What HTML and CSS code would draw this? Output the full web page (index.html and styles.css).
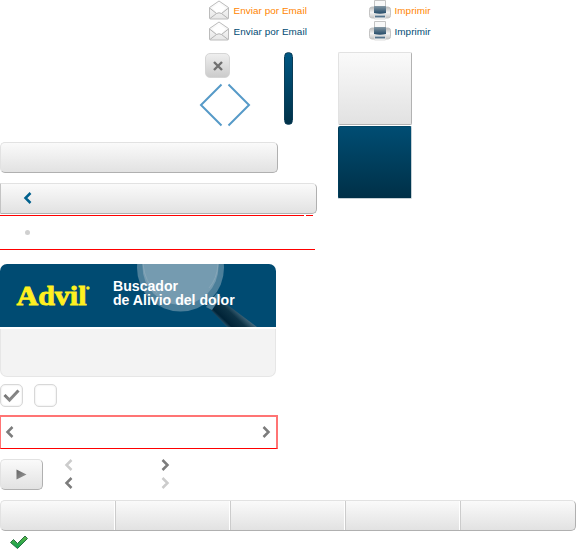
FILE: index.html
```
<!DOCTYPE html>
<html lang="es">
<head>
<meta charset="utf-8">
<title>Advil</title>
<link rel="stylesheet" href="styles.css">
</head>
<body>
<svg width="0" height="0" class="defs" aria-hidden="true">
  <defs>
    <linearGradient id="paper" x2="0" y2="1"><stop stop-color="#fff"/><stop offset="1" stop-color="#e6e6e6"/></linearGradient>
    <linearGradient id="body" x2="0" y2="1"><stop stop-color="#bbb"/><stop offset=".5" stop-color="#f4f4f4"/><stop offset="1" stop-color="#c4c4c4"/></linearGradient>
    <linearGradient id="screen" x2="0" y2="1"><stop stop-color="#8497a3"/><stop offset="1" stop-color="#234a69"/></linearGradient>
    <linearGradient id="grey" x2="1" y2="1"><stop stop-color="#666"/><stop offset="1" stop-color="#999"/></linearGradient>
    <linearGradient id="green" x2="0" y2="1"><stop stop-color="#60b546"/><stop offset="1" stop-color="#0aa150"/></linearGradient>
    <linearGradient id="handle" gradientUnits="userSpaceOnUse" x1="84" y1="58" x2="100" y2="41"><stop stop-color="#335f78"/><stop offset=".2" stop-color="#002337"/><stop offset=".6" stop-color="#0d3346"/><stop offset="1" stop-color="#55798d"/></linearGradient>
    <symbol id="mail" viewBox="0 0 22 20">
      <path d="M1.500 7.500 11 1l9.500 6.500v10.500q0 1-1 1h-17q-1 0-1-1z" fill="url(#paper)" stroke="#bcbcbc"/>
      <path d="m4 8 7-4.500L18 8l-5 5H9z" fill="#fff"/>
      <path d="m1.500 8 7 5.500q2.500-1.500 5 0l7-5.500M2 18.500l6.500-5M20 18.500l-6.500-5" fill="none" stroke="#b4b4b4"/>
    </symbol>
    <symbol id="print" viewBox="0 0 22 20">
      <path d="M5.500.5h11v7h-11z" fill="#f8f8f8" stroke="#c4c4c4"/>
      <rect x=".5" y="7" width="21" height="11" rx="2.500" fill="url(#body)" stroke="#c4c4c4"/>
      <path d="M5 6h12v7q-6 1.500-12 0z" fill="url(#screen)"/>
      <path d="M5.500 14.500h11v4.500h-11z" fill="#fafafa" stroke="#ddd"/>
      <path d="M6 16.500h10" stroke="#56748c" stroke-width="2"/>
    </symbol>
    <symbol id="left" viewBox="0 0 9 12"><path d="M7.500 1 2.500 6l5 5" fill="none" stroke="currentColor" stroke-width="2.500"/></symbol>
    <symbol id="right" viewBox="0 0 9 12"><path d="m1.500 1 5 5-5 5" fill="none" stroke="currentColor" stroke-width="2.500"/></symbol>
  </defs>
</svg>
<main class="page">
  <div class="actions">
    <div class="action hot"><svg><use href="#mail"/></svg><span>Enviar por Email</span></div>
    <div class="action hot"><svg><use href="#print"/></svg><span>Imprimir</span></div>
    <div class="action"><svg><use href="#mail"/></svg><span>Enviar por Email</span></div>
    <div class="action"><svg><use href="#print"/></svg><span>Imprimir</span></div>
  </div>

  <div class="controls">
    <div class="browse">
      <div class="close"><svg width="12" height="12" viewBox="0 0 12 12"><path d="m2 2 8 8M10 2l-8 8" stroke="#707070" stroke-width="2.400"/></svg></div>
      <svg class="arrows" width="52" height="44" viewBox="0 0 52 44"><path d="M22.500 1.500 2 22l20.500 20.500M29.500 1.500 50 22 29.500 42.500" fill="none" stroke="#569ac8" stroke-width="2"/></svg>
    </div>
    <div class="scrollbar"></div>
    <div class="tiles"><div class="tile"></div><div class="tile dark"></div></div>
  </div>

  <div class="bar"></div>
  <div class="bar back"><svg class="chev"><use href="#left"/></svg></div>
  <div class="rules">
    <div class="rule-top"><i></i><i></i></div>
    <span class="dot"></span>
  </div>

  <section class="finder">
    <header>
      <svg class="lens" width="140" height="63" viewBox="0 0 140 63">
        <path d="m72 43 11-12 6 8 32 24H91z" fill="url(#handle)"/>
        <path d="m70 43 11-14 4 4-9 13z" fill="#4c7e98"/>
        <circle cx="44.500" cy="4" r="43.500" fill="#4c7f9a"/>
        <circle cx="44.500" cy="3" r="38" fill="#759bb0"/>
        <path d="M7 0q2 19 14 29M82 0q-1 15-9 24" fill="none" stroke="#86a6b8"/>
      </svg>
      <svg class="logo" width="76" height="26" viewBox="0 0 76 26"><text x=".5" y="21" textLength="70" lengthAdjust="spacingAndGlyphs">Advil</text><circle cx="72" cy="4" r="1.800" fill="#fff020"/></svg>
      <h1>Buscador<br>de Alivio del dolor</h1>
    </header>
    <div class="panel"></div>
  </section>

  <div class="checks">
    <div class="box"><svg width="17" height="14" viewBox="0 0 17 14"><path d="m1.500 6 5 5L15.500 1.500" fill="none" stroke="url(#grey)" stroke-width="3"/></svg></div>
    <div class="box"></div>
  </div>

  <div class="slider"><svg class="chev"><use href="#left"/></svg><svg class="chev"><use href="#right"/></svg></div>

  <div class="player">
    <div class="play"><svg width="11" height="11" viewBox="0 0 11 11"><path d="m.5.500 10 5-10 5z" fill="url(#grey)"/></svg></div>
    <div class="pager">
      <svg class="chev off"><use href="#left"/></svg><svg class="chev"><use href="#right"/></svg>
      <svg class="chev"><use href="#left"/></svg><svg class="chev off"><use href="#right"/></svg>
    </div>
  </div>

  <div class="tabs"><div></div><div></div><div></div><div></div><div></div></div>
  <svg class="ok" width="20" height="16" viewBox="0 0 20 16"><path d="m1.500 7.500 3-3 4 4L16 1l2.500 2.500L8.500 13.500z" fill="url(#green)" stroke="#287044" stroke-linejoin="round"/></svg>
</main>
</body>
</html>
```
FILE: styles.css
```
* { box-sizing: border-box; }
body { margin: 0; background: #fff; font-family: "Liberation Sans", Arial, sans-serif; }
svg { display: block; flex: none; }
.defs { position: absolute; }
.page { width: 576px; height: 550px; overflow: hidden; }

.actions {
  display: grid;
  grid-template-columns: 161px 100px;
  grid-auto-rows: 21px;
  margin-left: 208px;
  height: 52px;
}
.action { display: flex; gap: 3.500px; font-size: 9.900px; letter-spacing: .06px; line-height: 21px; color: #004b73; white-space: nowrap; }
.action svg { width: 22px; height: 20px; }
.hot { color: #ff8500; }

.controls { display: flex; height: 90px; }
.browse { width: 85px; margin-left: 199px; }
.close {
  display: flex; align-items: center; justify-content: center;
  width: 25px; height: 25px; margin: 1px 0 5px 6px;
  border: 1px solid #d6d6d6; border-radius: 5px;
  background: linear-gradient(#eee, #ccc);
}
.scrollbar {
  width: 9px; height: 73px; margin-right: 45px;
  border: 1px solid #0a3c56; border-radius: 5px;
  background: linear-gradient(#005783, #003148);
}
.tile {
  width: 74px; height: 73px; margin-bottom: 1px;
  border: 1px solid #e2e2e2; border-right-color: #b2b2b2; border-bottom-color: #b2b2b2; border-radius: 2px;
  background: linear-gradient(#fafafa, #e2e2e2);
}
.tile.dark { border-color: #004768 #c5d0d5 #c5d0d5 #003c59; background: linear-gradient(#004d73, #003047); }

.bar, .play, .tabs {
  border: 1px solid #e2e2e2; border-right-color: #b0b0b0; border-bottom-color: #b0b0b0; border-radius: 5px;
  background: linear-gradient(#fafafa, #e2e2e2);
}
.bar { width: 278px; height: 31px; margin-bottom: 10px; }
.back { display: flex; align-items: center; width: 317px; margin-bottom: 1px; padding: 0 0 1px 22px; border-left-color: #c4c4c4; border-radius: 0 5px 5px 0; }
.chev { width: 9px; height: 12px; color: #7c7c7c; }
.back .chev { color: #00618e; }
.rules { width: 315px; height: 35px; margin-bottom: 14px; border-bottom: 1px solid #f00; }
.rule-top { display: flex; gap: 2px; height: 15px; }
.rule-top i { width: 304px; height: 1px; background: #f00; }
.rule-top i + i { width: 7px; }
.dot { display: block; width: 5px; height: 5px; margin-left: 25px; border-radius: 50%; background: #d0d0d0; }

.finder { width: 276px; height: 113px; margin-bottom: 7px; }
.finder header {
  position: relative; display: flex; height: 63px; margin-bottom: 2px; padding: 15px 0 0 16px;
  overflow: hidden; border-radius: 7px 7px 0 0; background: #004b72;
}
.lens { position: absolute; left: 136px; top: 0; }
.logo { position: relative; margin-top: 5px; overflow: visible; }
.logo text { font: bold 27px "Liberation Serif", serif; fill: #fff020; stroke: #fff020; stroke-width: .8px; }
h1 { position: relative; margin: 0 0 0 21px; color: #fff; font-size: 14.100px; line-height: 14px; white-space: nowrap; }
.panel { height: 48px; border: 1px solid #e6e6e6; border-top: 0; border-radius: 0 0 7px 7px; background: #f3f3f3; }

.checks { display: flex; gap: 11px; height: 31px; }
.box {
  display: flex; align-items: center; justify-content: center; width: 23px; height: 23px;
  border: 1px solid #d8d8d8; border-radius: 5px; background: #fff; box-shadow: inset 0 0 2px #ddd;
}
.slider {
  display: flex; align-items: center; justify-content: space-between;
  width: 278px; height: 34px; margin-bottom: 10px; padding: 0 5px 1px 4px;
  border: solid #ff7474; border-width: 2px 2px 1px 1px; border-bottom-color: #f00;
}
.player { display: flex; height: 41px; }
.play { display: flex; align-items: center; justify-content: center; width: 43px; height: 31px; }
.pager { display: grid; grid-template-columns: 97px 9px; grid-auto-rows: 18px; margin-left: 21px; }
.pager .off { color: #ccc; }
.tabs { display: grid; grid-template-columns: 114px repeat(4, 115px); height: 31px; }
.tabs div + div { border-left: 1px solid #ccc; box-shadow: -1px 0 #fff; }
.ok { margin: 4px 0 0 9px; }
```
